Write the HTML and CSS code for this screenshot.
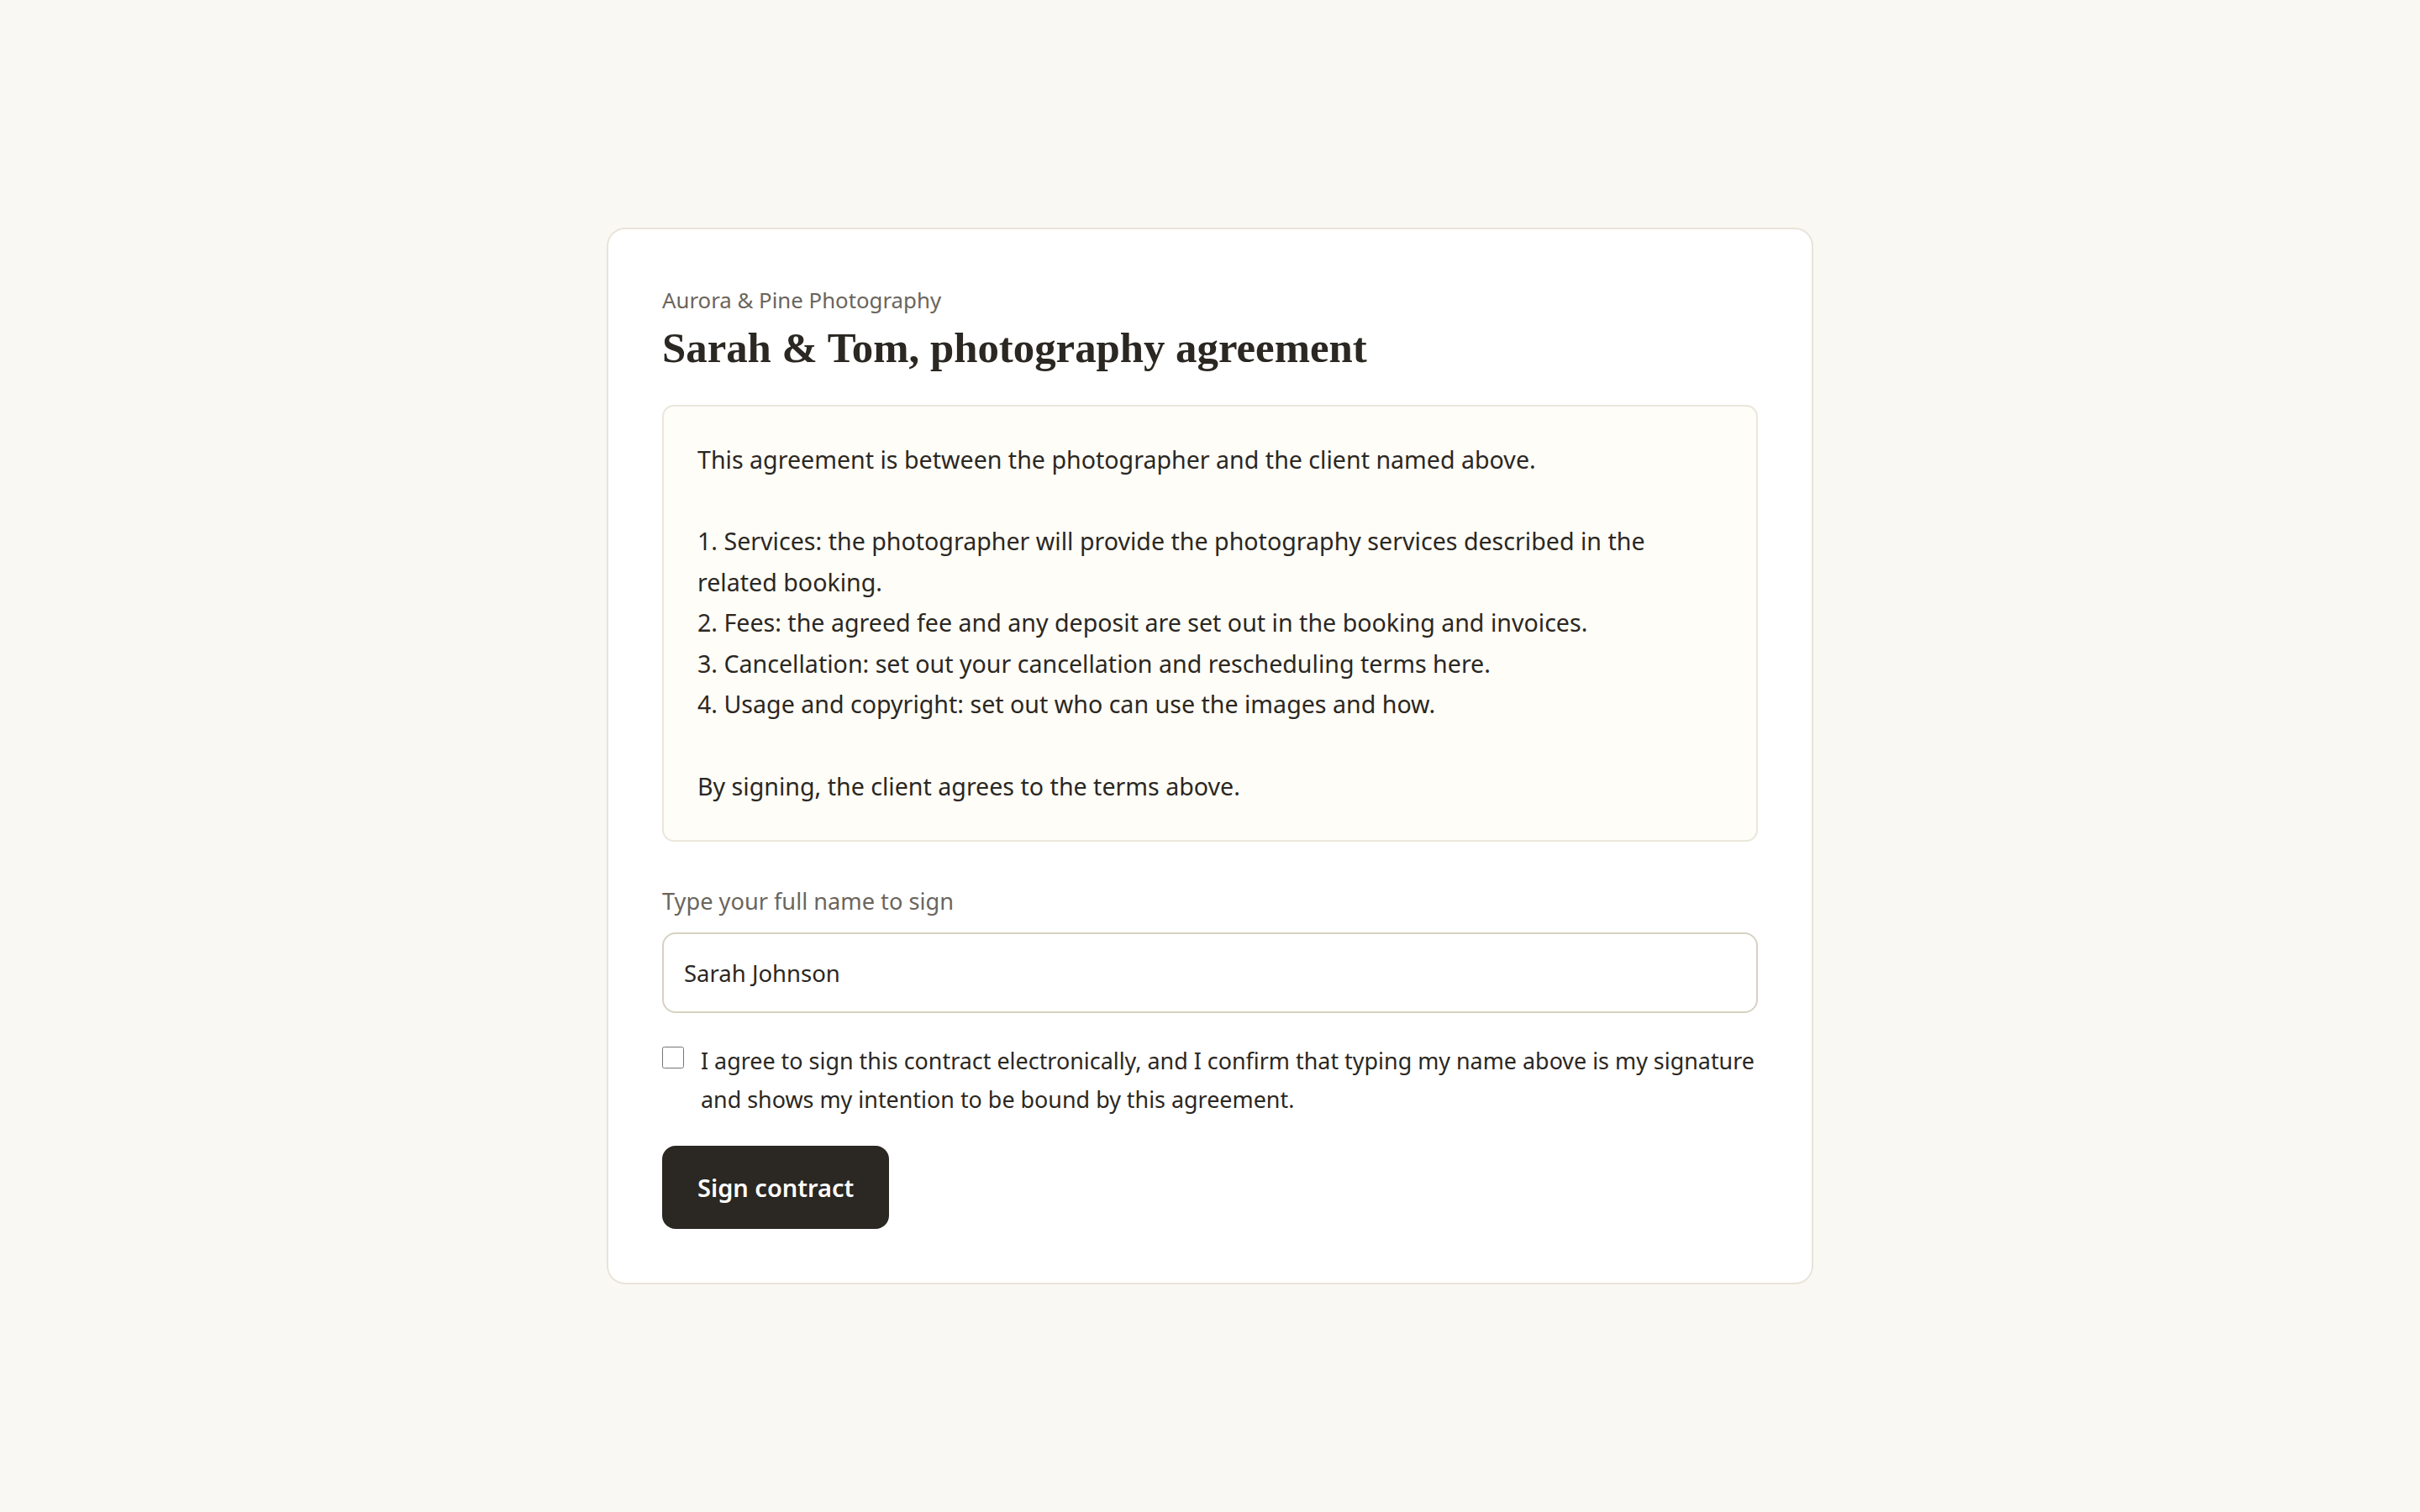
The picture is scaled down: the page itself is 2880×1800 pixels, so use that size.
FILE: index.html
```html
<!DOCTYPE html>
<html lang="en">
<head>
    <meta charset="UTF-8">
    <meta name="viewport" content="width=device-width, initial-scale=1.0">
    <title>Sarah &amp; Tom, photography agreement</title>
    <link rel="stylesheet" href="styles.css">
</head>
<body>

<div class="sign-card">
    <p class="studio-name">Aurora &amp; Pine Photography</p>
    <h1>Sarah &amp; Tom, photography agreement</h1>

    <div class="contract-body">This agreement is between the photographer and the client named above.

1. Services: the photographer will provide the photography services described in the related booking.
2. Fees: the agreed fee and any deposit are set out in the booking and invoices.
3. Cancellation: set out your cancellation and rescheduling terms here.
4. Usage and copyright: set out who can use the images and how.

By signing, the client agrees to the terms above.</div>

    <form class="sign-form" onsubmit="return false;">
        <label for="full_name" class="field-label">Type your full name to sign</label>
        <input type="text" id="full_name" name="full_name" value="Sarah Johnson">

        <label class="consent">
            <input type="checkbox" name="consent">
            <span>I agree to sign this contract electronically, and I confirm that typing my name above is my signature and shows my intention to be bound by this agreement.</span>
        </label>

        <button type="submit" class="sign-button">Sign contract</button>
    </form>
</div>

</body>
</html>
```

FILE: styles.css
```css
/* Page */
html, body { height: 100%; }
body {
    margin: 0; background-color: #f9f8f3; color: #2b2722;
    font-family: "Noto Sans", "Open Sans", sans-serif;
    display: flex; align-items: center; justify-content: center;
}

/* Card */
.sign-card {
    width: 1436px; box-sizing: border-box; padding: 64px;
    background: #fff; border: 2px solid #e8e4da; border-radius: 22px;
}
.studio-name {
    margin: 0; font-size: 25.8px; line-height: 40px; color: #6b655c;
}
h1 {
    margin: 7px 0 38px; font-family: "Liberation Serif", serif;
    font-size: 50.8px; line-height: 60px; font-weight: 700; color: #2b2722;
}

/* Contract text */
.contract-body {
    white-space: pre-wrap; padding: 39px 40px 40px; font-size: 28.6px; line-height: 48.6px;
    background: #fefdf8; border: 2px solid #ebe7dc; border-radius: 14px;
}

/* Signing form */
.sign-form { display: flex; flex-direction: column; align-items: flex-start; }
.field-label {
    margin-top: 51px; margin-bottom: 17px; font-size: 27.2px; line-height: 40px; color: #6b655c;
}
input[type="text"] {
    width: 100%; box-sizing: border-box; height: 96px; padding: 0 24px;
    border: 2px solid #d6d2c2; border-radius: 16px; background: #fff;
    font-family: inherit; font-size: 27.5px; color: #2b2722;
}
.consent {
    display: flex; gap: 20px; align-items: flex-start; margin-top: 34px;
    font-size: 26.9px; line-height: 46px;
}
.consent input { margin: 6px 0 0; width: 26px; height: 26px; flex-shrink: 0; }
.sign-button {
    margin-top: 32px; height: 99px; padding: 0 42px; border: none; border-radius: 16px;
    background: #2b2722; color: #fff; cursor: pointer;
    font-family: inherit; font-size: 29px; font-weight: 600;
}
```
